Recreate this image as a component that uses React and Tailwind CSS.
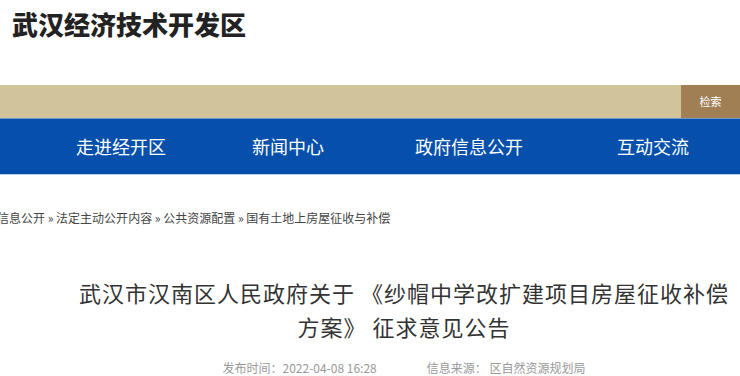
export default function App() {
  const cjk = { fontFamily: '"Noto Sans CJK SC", "Noto Sans", sans-serif' };
  return (
    <div className="w-[740px] h-[376px] overflow-hidden bg-white" style={cjk}>
      <div className="h-[85px] pl-[12px] pt-[8px]">
        <div className="text-[26px] leading-[32px] font-black text-[#222]">武汉经济技术开发区</div>
      </div>
      <div className="h-[33px] bg-[#d1c49b] flex justify-end">
        <div className="w-[59px] h-full bg-[#a17f55] flex items-center justify-center text-[11px] text-white">检索</div>
      </div>
      <div className="h-[1px] bg-[#6f98c9]"></div>
      <div className="h-[55px] bg-[#0650ac] flex items-center text-white text-[18px]">
        <span className="ml-[76px]">走进经开区</span>
        <span className="ml-[86px]">新闻中心</span>
        <span className="ml-[91px]">政府信息公开</span>
        <span className="ml-[94px]">互动交流</span>
      </div>
      <div className="h-[1px] bg-[#b9d0ee]"></div>
      <div className="mt-[34px] -ml-[3px] text-[12px] leading-[18px] text-[#444] whitespace-nowrap">
        信息公开 » 法定主动公开内容 » 公共资源配置 » 国有土地上房屋征收与补偿
      </div>
      <div className="ml-[68px] w-[672px] mt-[48px] text-center text-[22px] leading-[34px] text-[#333] tracking-[1px] whitespace-nowrap">
        武汉市汉南区人民政府关于 《纱帽中学改扩建项目房屋征收补偿
        <br />
        方案》 征求意见公告
      </div>
      <div className="ml-[68px] w-[672px] mt-[16px] flex justify-center text-[12px] leading-[18px] text-[#999] whitespace-nowrap">
        <span>发布时间：2022-04-08 16:28</span>
        <span className="ml-[50px]">信息来源： 区自然资源规划局</span>
      </div>
    </div>
  );
}
